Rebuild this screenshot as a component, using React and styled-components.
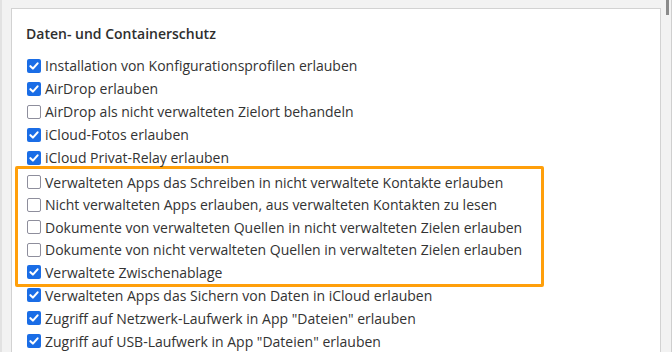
import React from 'react';
import styled, { createGlobalStyle } from 'styled-components';

const GlobalStyle = createGlobalStyle`
  html, body {
    margin: 0;
    padding: 0;
    background: #f2f2f2;
    overflow: hidden;
  }
  body {
    font-family: "Open Sans", "Noto Sans", sans-serif;
    color: #333;
  }
`;

const Page = styled.div`
  display: flex;
  height: 352px;
  border-left: 2px solid #e2e2e2;
  box-sizing: border-box;
`;

const Content = styled.div`
  flex: 1;
  padding: 8px 0 0 9px;
  overflow: hidden;
`;

const Panel = styled.section`
  width: 650px;
  box-sizing: border-box;
  background: #fff;
  border: 1px solid #d2d2d2;
  border-bottom: none;
  height: 344px;
  padding: 13px 14px 0 14px;
`;

const Title = styled.h3`
  margin: 0 0 8px 0;
  font-size: 14px;
  line-height: 24px;
  font-weight: 600;
  color: #2e2e2e;
`;

const Scroll = styled.div`
  width: 11px;
  box-sizing: border-box;
  border-right: 1px solid #cfcfcf;
  padding-left: 5px;
`;

const Thumb = styled.div`
  width: 3px;
  height: 15px;
  background: #8a8a8a;
`;

const Row = styled.label`
  display: flex;
  align-items: center;
  gap: 5px;
  height: ${p => (p.$tight ? '22.5px' : '23px')};
  padding-left: 1px;
  font-size: 14px;
  color: #333;
  white-space: nowrap;
`;

const Box = styled.span`
  width: 14px;
  height: 14px;
  box-sizing: border-box;
  border-radius: 2px;
  flex: none;
  display: flex;
  align-items: center;
  justify-content: center;
  margin-right: -1px;
  background: ${p => (p.$on ? '#1a6de6' : '#fff')};
  border: ${p => (p.$on ? 'none' : '1.5px solid #8e8e9c')};
`;

const Highlight = styled.div`
  margin: -3px 0 -3px -11px;
  width: 529px;
  box-sizing: border-box;
  border: 3px solid #ff9f0a;
  border-radius: 2px;
  padding: 2px 0 0 8px;
`;

const Check = ({ on }) => (
  <Box $on={on}>
    {on && (
      <svg width="12" height="12" viewBox="0 0 12 12">
        <path d="M2.4 6.2 L4.9 8.6 L9.6 3.4" fill="none" stroke="#fff" strokeWidth="2.1" strokeLinecap="round" strokeLinejoin="round" />
      </svg>
    )}
  </Box>
);

const Item = ({ on, text, tight }) => (
  <Row $tight={tight}>
    <Check on={on} />
    <span>{text}</span>
  </Row>
);

const before = [
  [true, 'Installation von Konfigurationsprofilen erlauben'],
  [true, 'AirDrop erlauben'],
  [false, 'AirDrop als nicht verwalteten Zielort behandeln'],
  [true, 'iCloud-Fotos erlauben'],
  [true, 'iCloud Privat-Relay erlauben'],
];

const marked = [
  [false, 'Verwalteten Apps das Schreiben in nicht verwaltete Kontakte erlauben'],
  [false, 'Nicht verwalteten Apps erlauben, aus verwalteten Kontakten zu lesen'],
  [false, 'Dokumente von verwalteten Quellen in nicht verwalteten Zielen erlauben'],
  [false, 'Dokumente von nicht verwalteten Quellen in verwalteten Zielen erlauben'],
  [true, 'Verwaltete Zwischenablage'],
];

const after = [
  [true, 'Verwalteten Apps das Sichern von Daten in iCloud erlauben'],
  [true, 'Zugriff auf Netzwerk-Laufwerk in App "Dateien" erlauben'],
  [true, 'Zugriff auf USB-Laufwerk in App "Dateien" erlauben'],
];

export default function App() {
  return (
    <>
      <GlobalStyle />
      <Page>
        <Content>
          <Panel>
            <Title>Daten- und Containerschutz</Title>
            {before.map(([on, t]) => <Item key={t} on={on} text={t} />)}
            <Highlight>
              {marked.map(([on, t]) => <Item key={t} on={on} text={t} tight />)}
            </Highlight>
            {after.map(([on, t]) => <Item key={t} on={on} text={t} />)}
          </Panel>
        </Content>
        <Scroll>
          <Thumb />
        </Scroll>
      </Page>
    </>
  );
}
